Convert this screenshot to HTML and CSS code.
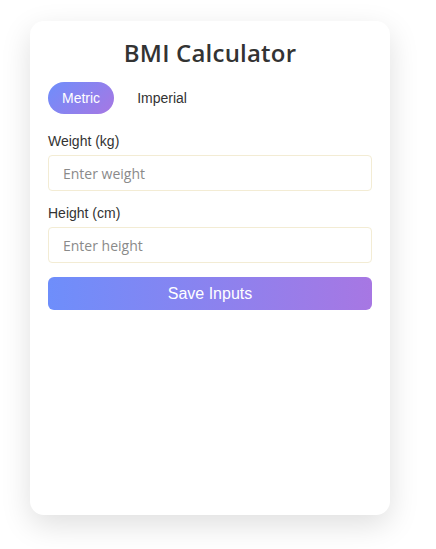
FILE: index.html
```html
<!DOCTYPE html>
<html>
<head>
<meta charset="utf-8">
<link rel="stylesheet" href="styles.css">
</head>
<body>
<div class="card">
  <h1 class="title">BMI Calculator</h1>
  <div class="tabs">
    <button class="tab active">Metric</button>
    <button class="tab">Imperial</button>
  </div>
  <div class="field">
    <label class="label">Weight (kg)</label>
    <input class="input" type="text" placeholder="Enter weight">
  </div>
  <div class="field">
    <label class="label">Height (cm)</label>
    <input class="input" type="text" placeholder="Enter height">
  </div>
  <button class="save">Save Inputs</button>
</div>
</body>
</html>
```

FILE: styles.css
```css
html, body {
  margin: 0;
  padding: 0;
  background: #ffffff;
}
body {
  padding: 21px 46px 34px 30px;
  font-family: "Liberation Sans", Arial, sans-serif;
  color: #333;
}
.card {
  width: 360px;
  height: 494px;
  box-sizing: border-box;
  padding: 18px 18px;
  background: #fff;
  border-radius: 14px;
  box-shadow: 0 10px 30px rgba(0, 0, 0, 0.13);
}
.title {
  margin: 0;
  text-align: center;
  font-family: "Open Sans", sans-serif;
  font-weight: 600;
  font-size: 24px;
  line-height: 28px;
  letter-spacing: 0.2px;
  color: #333;
}
.tabs {
  display: flex;
  gap: 9px;
  margin-top: 15px;
}
.tab {
  border: none;
  background: transparent;
  font-family: "Liberation Sans", Arial, sans-serif;
  font-size: 14px;
  color: #333;
  height: 32px;
  padding: 0 14px;
  border-radius: 16px;
}
.tab.active {
  background: linear-gradient(135deg, #6e8efb, #a777e3);
  color: #fff;
}
.field {
  display: flex;
  flex-direction: column;
  margin-top: 19px;
}
.field + .field {
  margin-top: 14px;
}
.label {
  font-size: 14px;
  line-height: 16px;
  color: #333;
  margin-bottom: 6px;
}
.input {
  height: 36px;
  box-sizing: border-box;
  border: 1px solid #f3ecd4;
  border-radius: 4px;
  padding: 0 14px;
  font-family: "Open Sans", sans-serif;
  font-size: 14px;
  color: #333;
  outline: none;
}
.input::placeholder {
  color: #8a8a8a;
}
.save {
  margin-top: 14px;
  width: 100%;
  height: 33px;
  border: none;
  border-radius: 6px;
  background: linear-gradient(90deg, #6e8efb, #a777e3);
  color: #fff;
  font-family: "Liberation Sans", Arial, sans-serif;
  font-size: 16px;
}
```
